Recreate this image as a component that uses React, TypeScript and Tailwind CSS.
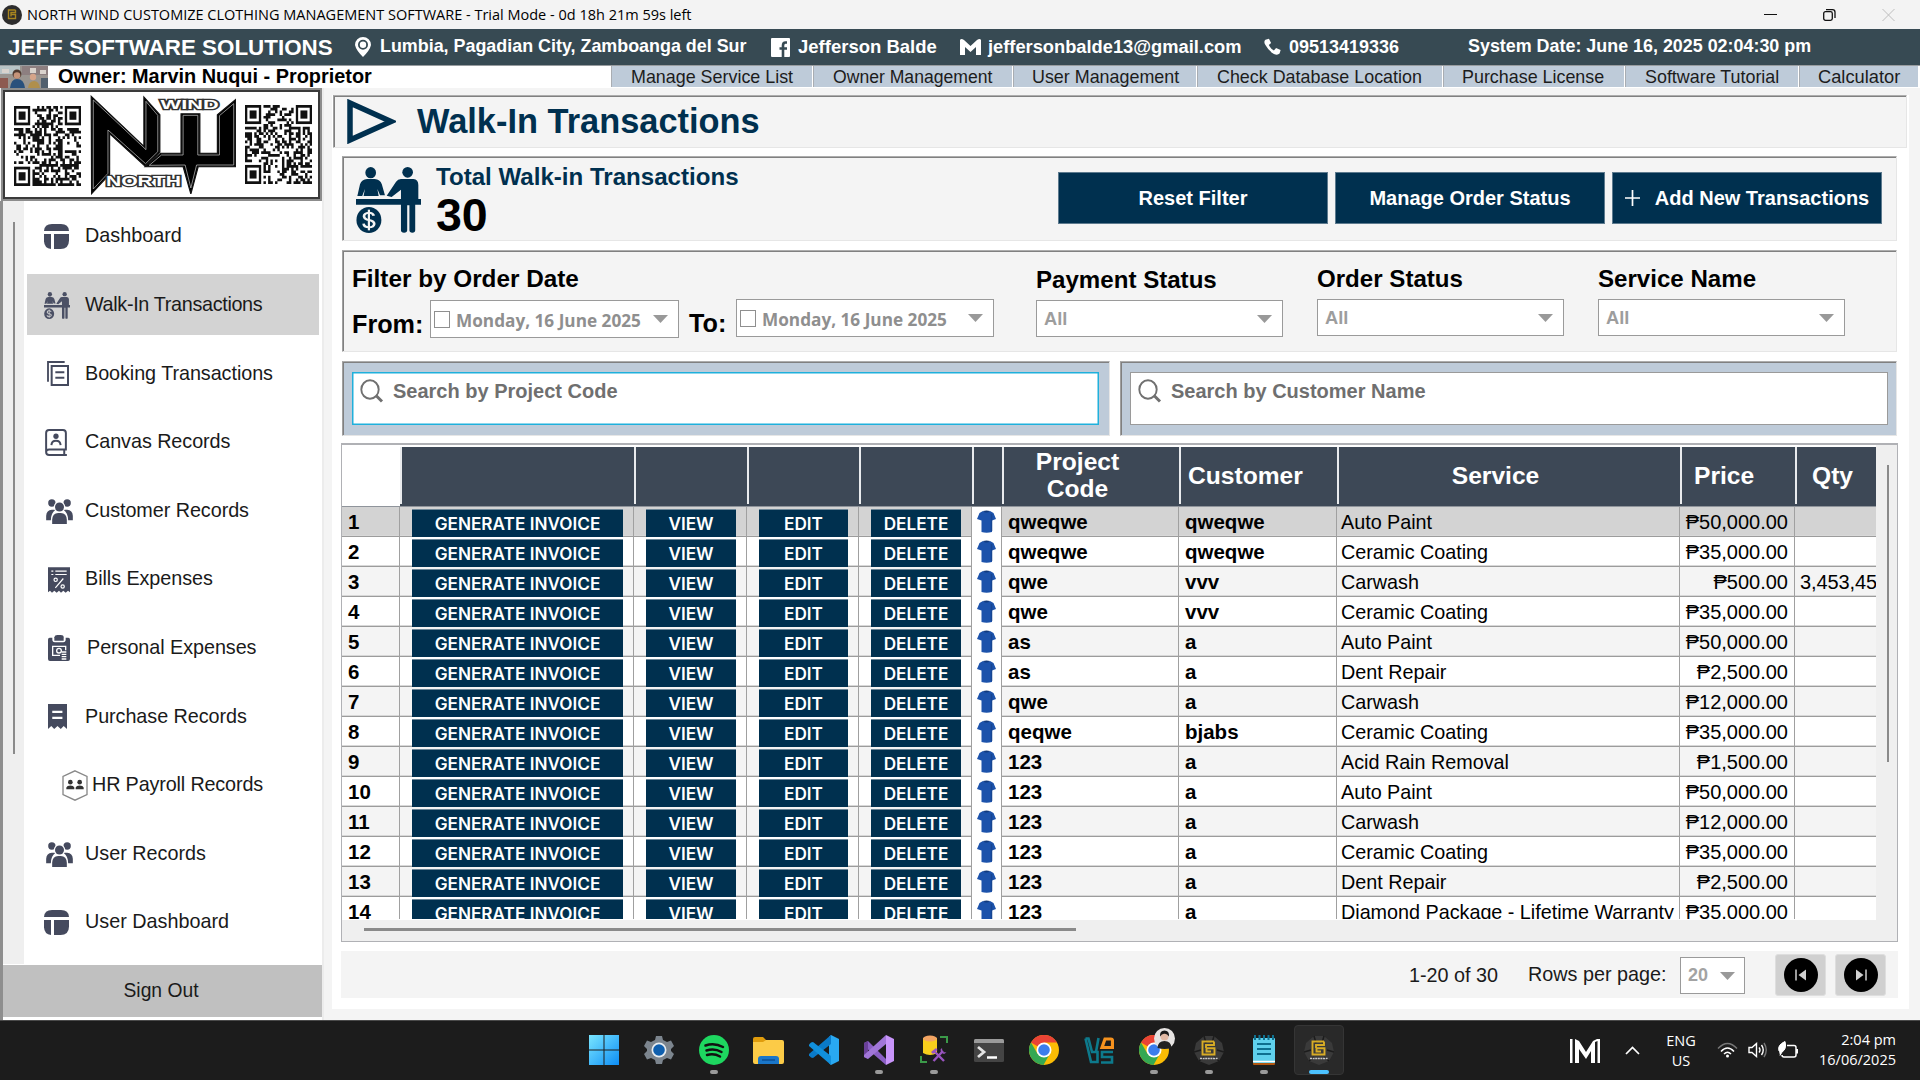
import React, { ReactNode } from 'react';

const INK = '#454a5e';
const NAVY = '#00304f';

/* ---------- Shared icons ---------- */

function CounterIcon({ className, color, paper }: { className: string; color: string; paper: string }) {
  return (
    <svg className={className} viewBox="59 80 146 198" preserveAspectRatio="none" fill={color}>
      <ellipse cx="92" cy="97" rx="12" ry="17" />
      <path d="M62 167 L68 132 Q72 117 84 116 H101 Q113 117 117 132 L124 165 H113 L107 146 L110 167 H76 L79 146 L73 167Z" />
      <ellipse cx="175" cy="96" rx="12" ry="16" />
      <path d="M160 116 H188 Q199 118 199 134 V176 H205 V193 H192 V270 Q192 277 185.500 277 Q179 277 179 270 V195 H174 V270 Q174 277 167 277 Q160 277 160 270 V193 H59 V176 H160 V148 L139 170 L128 166 L149 124 Q153 116 160 116Z" />
      <ellipse cx="88" cy="239" rx="28" ry="39" />
      <g fill="none" stroke={paper} strokeWidth="6">
        <path d="M99 226 Q97 217 88 217 Q77 218 77 228 Q78 237 88 239 Q100 242 100 251 Q99 261 88 261 Q77 261 76 250" />
        <path d="M88 208 V270" strokeWidth="5" />
      </g>
    </svg>
  );
}

function DashboardIcon() {
  return (
    <svg className="ml-5 h-[25px] w-[25px]" viewBox="0 0 75 75" fill={INK}>
      <path d="M0 21 Q1 0 24 0 H51 Q74 0 75 21Z" />
      <path d="M0 30 H21 V75 Q1 73 0 52Z" />
      <path d="M30 30 H75 V50 Q74 75 50 75 H30Z" />
    </svg>
  );
}

function GroupIcon() {
  return (
    <svg className="ml-[22px] h-[25px] w-[27px]" viewBox="0 0 80 75" fill={INK}>
      <circle cx="17" cy="12" r="11" />
      <circle cx="63" cy="12" r="11" />
      <path d="M0 64 V50 Q1 33 17 32 H28 Q14 42 14 64Z M80 64 V50 Q79 33 63 32 H52 Q66 42 66 64Z" />
      <circle cx="40" cy="24" r="17" fill="#fff" />
      <circle cx="40" cy="24" r="13.500" />
      <path d="M18 75 V62 Q19 43 36 42 H44 Q61 43 62 62 V75Z" />
    </svg>
  );
}

function BookingIcon() {
  return (
    <svg className="ml-[23px] h-[25px] w-[22px]" viewBox="0 0 66 75" fill="none" stroke={INK}>
      <path d="M3 62 V3 H53" strokeWidth="5.500" />
      <rect x="14" y="15" width="49" height="57" strokeWidth="6" />
      <path d="M25 34 H52 M25 50 H52" strokeWidth="6" />
    </svg>
  );
}

function CanvasIcon() {
  return (
    <svg className="ml-[21px] h-[27px] w-[22px]" viewBox="0 0 66 82" fill="none" stroke={INK} strokeWidth="6">
      <path d="M3 70 V12 Q3 3 12 3 H54 Q63 3 63 12 V62 H12 Q3 62 3 70 Q3 79 12 79 H66 M58 62 V79" />
      <circle cx="33" cy="22" r="8" fill={INK} stroke="none" />
      <path d="M19 49 Q20 36 33 36 Q46 36 47 49" />
    </svg>
  );
}

function BillsIcon() {
  return (
    <svg className="ml-6 h-[26px] w-[22px]" viewBox="0 0 66 77" fill={INK}>
      <path d="M0 0 H66 V75 L60 71 L53 77 L46 71 L39 77 L33 71 L26 77 L19 71 L12 77 L6 71 L0 75Z" />
      <path d="M10 12 H16 M22 12 H56 M10 22 H16 M22 22 H56 M46 34 L22 62" stroke="#fff" strokeWidth="3.500" />
      <circle cx="23" cy="38" r="5" fill="none" stroke="#fff" strokeWidth="3.500" />
      <circle cx="44" cy="58" r="5" fill="none" stroke="#fff" strokeWidth="3.500" />
    </svg>
  );
}

function PersonalIcon() {
  return (
    <svg className="ml-6 h-[26px] w-[22px]" viewBox="0 0 66 78" fill={INK}>
      <path d="M5 8 H13 V16 Q14 22 20 22 H46 Q52 22 53 16 V8 H61 Q66 8 66 14 V72 Q66 78 60 78 H6 Q0 78 0 72 V14 Q0 8 5 8Z" />
      <path d="M19 17 V7 Q20 0 28 0 H38 Q47 0 47 7 V17Z" />
      <path d="M36 61 H14 V34 H53 V46" fill="none" stroke="#fff" strokeWidth="4" />
      <circle cx="33" cy="47" r="7" fill="none" stroke="#fff" strokeWidth="4" />
      <path d="M41 51 H55 M41 58 H55 M41 65 H55 M41 72 H55" stroke="#fff" strokeWidth="4" />
    </svg>
  );
}

function PurchaseIcon() {
  return (
    <svg className="ml-6 h-[25px] w-[19px]" viewBox="0 0 58 76" fill={INK}>
      <path d="M0 0 H58 V76 L48 67 L39 76 L29 67 L19 76 L10 67 L0 76Z" />
      <path d="M13 24 H44 M13 42 H44" stroke="#fff" strokeWidth="7" />
    </svg>
  );
}

function PayrollIcon() {
  return (
    <svg className="ml-[38px] h-[31px] w-[26px]" viewBox="0 0 78 92" fill="#333">
      <path d="M39 2 L75 19 V73 L39 90 L3 73 V19Z" fill="#fff" stroke="#888" strokeWidth="4" />
      <circle cx="25" cy="36" r="7" />
      <circle cx="53" cy="36" r="7" />
      <path d="M13 57 V52 Q15 46 25 46 Q35 46 37 52 V57Z M41 57 V52 Q43 46 53 46 Q63 46 65 52 V57Z" />
    </svg>
  );
}

function Caret({ className = '' }: { className?: string }) {
  return (
    <svg className={`h-2 w-[15px] shrink-0 ${className}`} viewBox="0 0 15 8" preserveAspectRatio="none">
      <path d="M0 0 H15 L7.500 8Z" fill="#999" />
    </svg>
  );
}

function SearchIcon() {
  return (
    <svg className="mt-[6px] ml-[7px] h-6 w-6 shrink-0" viewBox="0 0 24 24" fill="none" stroke="#707070">
      <ellipse cx="10" cy="10.500" rx="8.700" ry="9.200" strokeWidth="1.900" />
      <path d="M16 16.500 L22 22.500" strokeWidth="3" />
    </svg>
  );
}

/* ---------- Brand artwork ---------- */

const QR_SIZE = 29;

function qrModules(seed: number): string {
  let state = seed;
  let path = '';
  for (let y = 0; y < QR_SIZE; y++) {
    for (let x = 0; x < QR_SIZE; x++) {
      state = (state * 1103515245 + 12345) % 2147483648;
      const inFinder =
        (x < 8 && y < 8) || (x > QR_SIZE - 9 && y < 8) || (x < 8 && y > QR_SIZE - 9);
      if (!inFinder && state / 2147483648 > 0.48) path += `M${x} ${y}h1.050v1h-1.050z`;
    }
  }
  return path;
}

function QrCode({ seed, className }: { seed: number; className: string }) {
  return (
    <svg className={className} viewBox="0 0 29 29" preserveAspectRatio="none">
      <path d={qrModules(seed)} fill="#111" />
      {[[0, 0], [22, 0], [0, 22]].map(([x, y]) => (
        <g key={`${x}-${y}`}>
          <rect x={x + 0.5} y={y + 0.5} width="6" height="6" fill="none" stroke="#111" />
          <rect x={x + 2} y={y + 2} width="3" height="3" fill="#111" />
        </g>
      ))}
    </svg>
  );
}

function NorthWindLogo() {
  return (
    <svg className="mt-[3px] h-[100px] w-[147px]" viewBox="219 286 360 300" preserveAspectRatio="none">
      <g stroke="#111" strokeWidth="3" fill="#000">
        <path d="M222 290 L351 440 V292 L390 345 V458 L354 500 L267 402 V524 L223 582Z" />
        <path d="M354 501 L392 461 H442 V342 H488 V461 H531 V345 L575 300 V501 H484 L466 583 L447 501Z" />
      </g>
      <g fill="none" stroke="#bbb" strokeWidth="2">
        <path d="M227 301 L356 450 V305 L385 347 V456 L355 492 L263 391 V521 L227 568Z" />
        <path d="M364 497 L394 466 H447 V347 H483 V466 H536 V348 L571 312 V496 H480 L466 565 L452 496Z" />
      </g>
      <g fontFamily="Liberation Sans" fontWeight="700" fill="#fff" stroke="#333" strokeWidth="8" paintOrder="stroke">
        <text x="392" y="327" fontSize="41" textLength="142" lengthAdjust="spacingAndGlyphs">WIND</text>
        <text x="258" y="560" fontSize="43" textLength="184" lengthAdjust="spacingAndGlyphs">NORTH</text>
      </g>
    </svg>
  );
}

/* ---------- Top bars ---------- */

function TitleBar() {
  return (
    <div className="flex h-[29px] items-center bg-[#f3f3f3]">
      <svg className="ml-0.5 h-5 w-5" viewBox="0 0 20 20">
        <circle cx="10" cy="10" r="10" fill="#2d2d2d" />
        <path d="M13.500 5 H6.500 V13.500 H13.500 V9.500 H9 M13.500 5 V7.500 H9 V11.500" fill="none" stroke="#a8851f" strokeWidth="1.400" />
      </svg>
      <span className="mt-px ml-[5px] whitespace-nowrap font-['Open_Sans'] text-[14.5px] leading-none">
        NORTH WIND CUSTOMIZE CLOTHING MANAGEMENT SOFTWARE - Trial Mode - 0d 18h 21m 59s left
      </span>
      <div className="mr-[25px] ml-auto flex items-center gap-[46px]">
        <svg className="h-3 w-[13px]" viewBox="0 0 13 12"><path d="M0 5.500 H13" stroke="#111" /></svg>
        <svg className="h-3 w-[13px]" viewBox="0 0 13 12" fill="none" stroke="#111" strokeWidth="1.300">
          <rect x="0.700" y="2.700" width="8.600" height="8.600" rx="1.800" />
          <path d="M3 0.700 H9.500 Q12 0.700 12 3.200 V9" />
        </svg>
        <svg className="h-3 w-[13px]" viewBox="0 0 13 12"><path d="M0.500 0 L12.500 12 M12.500 0 L0.500 12" stroke="#bdbdbd" /></svg>
      </div>
    </div>
  );
}

function CompanyBar() {
  return (
    <div className="grid h-9 grid-cols-[354px_417px_189px_304px_204px_1fr] items-center whitespace-nowrap bg-[#374a53] text-[18px] font-bold leading-none text-white">
      <span className="pt-0.5 pl-2 text-[22.4px]">JEFF SOFTWARE SOLUTIONS</span>
      <div className="flex items-center">
        <svg className="h-5 w-[18px]" viewBox="0 0 18 20">
          <path fillRule="evenodd" d="M9 0 A8 8 0 0 1 17 8 Q16 13 9 20 Q2 13 1 8 A8 8 0 0 1 9 0Z M9 2.800 A5 5 0 1 0 9 12.800 A5 5 0 1 0 9 2.800Z" fill="#fff" />
          <circle cx="9" cy="7.800" r="3.200" fill="#fff" />
        </svg>
        <span className="ml-2 text-[17.9px]">Lumbia, Pagadian City, Zamboanga del Sur</span>
      </div>
      <div className="flex items-center">
        <svg className="h-[19px] w-[19px]" viewBox="0 0 19 19">
          <rect width="19" height="19" rx="1" fill="#fff" />
          <path d="M16 4.500 H14.500 Q12 4.500 12 7.500 V19 M8.500 10.500 H16" fill="none" stroke="#374a53" strokeWidth="2.600" />
        </svg>
        <span className="ml-2 text-[18.5px]">Jefferson Balde</span>
      </div>
      <div className="flex items-center">
        <svg className="h-4 w-[21px]" viewBox="0 0 21 16">
          <path d="M0 16 V1 Q1 -1 4 1 L10.500 7 L17 1 Q20 -1 21 1 V16 H16 V8 L10.500 13 L5 8 V16Z" fill="#fff" />
        </svg>
        <span className="ml-[7px] text-[18.3px]">jeffersonbalde13@gmail.com</span>
      </div>
      <div className="flex items-center">
        <svg className="-mt-0.5 h-[17px] w-[17px]" viewBox="0 0 24 24" fill="#fff">
          <path d="M7 1 L2 2.500 Q-1 5 2 10 Q7 19 14 22.500 Q19 25 22 22 L23.500 17 L17 14 L14 17.500 Q9 15 6.800 10 L10 7Z" />
        </svg>
        <span className="ml-2">09513419336</span>
      </div>
      <span className="text-[17.9px]">System Date: June 16, 2025 02:04:30 pm</span>
    </div>
  );
}

function MenuItem({ width, pad, children }: { width: string; pad: string; children: ReactNode }) {
  return (
    <div className={`flex h-[21px] items-center border-r border-white bg-[#becbd9] pt-0.5 shadow-[inset_1px_0_0_#a9adb2] ${width} ${pad}`}>
      {children}
    </div>
  );
}

function OwnerBar() {
  return (
    <div className="flex h-[23px] items-start whitespace-nowrap border-t border-[#989c9f] bg-white leading-none text-[#1c1c1c]">
      <svg className="h-[22px] w-12" viewBox="0 0 48 22" preserveAspectRatio="none">
        <rect width="48" height="22" fill="#9a9590" />
        <path d="M0 0 H20 V8 H0Z" fill="#b9c4c6" />
        <path d="M22 0 H48 V9 H22Z" fill="#8d7f80" />
        <path d="M2 3 H9 V7 H2Z M30 2 H36 V7 H30Z M40 4 H46 V8 H40Z" fill="#d9d3cd" />
        <circle cx="17" cy="8" r="4.500" fill="#4f3a30" />
        <circle cx="17" cy="9.500" r="3.300" fill="#c6947a" />
        <path d="M10 22 Q11 13 17 13 Q24 13 25 22Z" fill="#29507c" />
        <circle cx="33" cy="11" r="3.200" fill="#d6a489" />
        <path d="M28 22 Q29 15 34 15 Q39 15 40 22Z" fill="#b08f4c" />
        <path d="M0 12 H8 V22 H0Z" fill="#8d5a50" />
        <path d="M41 12 H48 V22 H41Z" fill="#51606e" />
      </svg>
      <span className="mt-px ml-[9px] w-[554px] pl-px text-[19.9px] font-bold text-black">Owner: Marvin Nuqui - Proprietor</span>
      <div className="flex text-[17.9px]">
        <MenuItem width="w-[202px]" pad="pl-5">Manage Service List</MenuItem>
        <MenuItem width="w-[200px]" pad="pl-5"><span className="text-[17.6px]">Owner Management</span></MenuItem>
        <MenuItem width="w-[184px]" pad="pl-[19px]">User Management</MenuItem>
        <MenuItem width="w-[246px]" pad="pl-5">Check Database Location</MenuItem>
        <MenuItem width="w-[182px]" pad="pl-[19px]">Purchase License</MenuItem>
        <MenuItem width="w-[174px]" pad="pl-5">Software Tutorial</MenuItem>
        <MenuItem width="w-[120px]" pad="pl-[19px]"><span className="text-[18.3px]">Calculator</span></MenuItem>
      </div>
    </div>
  );
}

/* ---------- Sidebar ---------- */

const NAV: { label: string; icon: ReactNode; active?: boolean; shift?: string }[] = [
  { label: 'Dashboard', icon: <DashboardIcon /> },
  {
    label: 'Walk-In Transactions',
    icon: <CounterIcon className="ml-5 h-[27px] w-[26px]" color="#4b5065" paper="#d3d3d3" />,
    active: true,
    shift: 'tracking-[-0.33px]',
  },
  { label: 'Booking Transactions', icon: <BookingIcon />, shift: 'tracking-[-0.06px]' },
  { label: 'Canvas Records', icon: <CanvasIcon />, shift: 'tracking-[-0.06px]' },
  { label: 'Customer Records', icon: <GroupIcon />, shift: 'tracking-[-0.06px]' },
  { label: 'Bills Expenses', icon: <BillsIcon />, shift: 'tracking-[-0.06px]' },
  { label: 'Personal Expenses', icon: <PersonalIcon />, shift: 'ml-0.5 tracking-[-0.06px]' },
  { label: 'Purchase Records', icon: <PurchaseIcon />, shift: 'tracking-[-0.06px]' },
  { label: 'HR Payroll Records', icon: <PayrollIcon />, shift: 'ml-[7px] tracking-[-0.15px]' },
  { label: 'User Records', icon: <GroupIcon /> },
  { label: 'User Dashboard', icon: <DashboardIcon /> },
];

function Sidebar() {
  return (
    <aside className="flex h-[932px] w-[324px] shrink-0 flex-col border-r-2 border-[#ececec]">
      <div className="ml-px h-[113px] border-2 border-[#8c8c8c] bg-white">
        <div className="flex h-full items-start border-2 border-[#3a3a3a]">
          <QrCode seed={20} className="mt-[14px] ml-[9px] h-20 w-[67px]" />
          <div className="ml-[9px]"><NorthWindLogo /></div>
          <QrCode seed={77} className="mt-[13px] ml-2 h-[79px] w-[67px]" />
        </div>
      </div>
      <div className="flex min-h-0 flex-1 flex-col border-l-[3px] border-[#8e8e8e] bg-white">
        <div className="flex h-[763px]">
          <div className="h-full w-[21px] shrink-0 bg-[#efefef] pt-[21px] pl-[10px]">
            <div className="h-[532px] w-[2px] bg-[#8b8b8b]" />
          </div>
          <nav className="flex-1 pt-px">
            {NAV.map((item, i) => (
              <div key={i} className="flex h-[68.6px] items-center pr-[3px] pl-[3px]">
                <div className={`flex h-[61px] flex-1 items-center text-[19.8px] whitespace-nowrap text-[#1a1a1a] ${item.active ? 'bg-[#d3d3d3]' : ''}`}>
                  <div className="-ml-[3px] w-[61px] shrink-0 pt-px">{item.icon}</div>
                  <span className={item.shift ?? ''}>{item.label}</span>
                </div>
              </div>
            ))}
          </nav>
        </div>
        <div className="mt-px flex h-[52px] items-center justify-center bg-[#c0c0c0] pr-[3px] text-[19.3px] text-[#1a1a1a]">
          <span className="pt-px">Sign Out</span>
        </div>
      </div>
    </aside>
  );
}

/* ---------- Main content ---------- */

function Panel({ className, children }: { className: string; children: ReactNode }) {
  return (
    <section className={`border border-t-[#adadad] border-r-[#e6e6e6] border-b-[#e6e6e6] border-l-[#a0a0a0] shadow-[inset_1px_1px_0_#808080] ${className}`}>
      {children}
    </section>
  );
}

function ActionButton({ children }: { children: ReactNode }) {
  return (
    <button className="flex h-[52px] w-[270px] items-center justify-center whitespace-nowrap border border-[#5d7a8e] bg-[#00304f] text-[20px] font-bold text-white">
      {children}
    </button>
  );
}

function DateField({ width }: { width: string }) {
  return (
    <div className={`flex h-[38px] items-center border border-[#9a9a9a] bg-white ${width}`}>
      <div className="ml-[3px] h-[17px] w-4 border border-[#8f8f8f]" />
      <span className="ml-[6px] whitespace-nowrap pt-[3px] font-['Open_Sans'] text-[17.2px] leading-none font-bold text-[#8f8f8f]">Monday, 16 June 2025</span>
      <Caret className="mr-[10px] ml-auto" />
    </div>
  );
}

function StatusFilter({ label, className }: { label: string; className: string }) {
  return (
    <div className={`w-[247px] ${className}`}>
      <div className="h-9 text-[24.1px] leading-[31px] font-bold whitespace-nowrap">{label}</div>
      <div className="flex h-[37px] items-center border border-[#9a9a9a] bg-white">
        <span className="ml-[7px] pt-px text-[18.3px] font-bold text-[#9d9d9d]">All</span>
        <Caret className="mr-[10px] ml-auto" />
      </div>
    </div>
  );
}

function SearchBox({ label, focused, className }: { label: string; focused?: boolean; className: string }) {
  return (
    <Panel className={`h-[75px] bg-[#becbd9] pt-[10px] pl-[9px] ${className}`}>
      <div className={`flex h-[53px] items-start border bg-white ${focused ? 'w-[747px] border-[#1fb0dc] shadow-[inset_0_0_0_0.5px_#1fb0dc]' : 'w-[758px] border-[#9a9a9a]'}`}>
        <SearchIcon />
        <span className="mt-[3px] ml-[9px] text-[20px] font-bold whitespace-nowrap text-[#6f6f6f]">{label}</span>
      </div>
    </Panel>
  );
}

const ROWS: [string, string, string, string, string][] = [
  ['qweqwe', 'qweqwe', 'Auto Paint', '₱50,000.00', ''],
  ['qweqwe', 'qweqwe', 'Ceramic Coating', '₱35,000.00', ''],
  ['qwe', 'vvv', 'Carwash', '₱500.00', '3,453,45'],
  ['qwe', 'vvv', 'Ceramic Coating', '₱35,000.00', ''],
  ['as', 'a', 'Auto Paint', '₱50,000.00', ''],
  ['as', 'a', 'Dent Repair', '₱2,500.00', ''],
  ['qwe', 'a', 'Carwash', '₱12,000.00', ''],
  ['qeqwe', 'bjabs', 'Ceramic Coating', '₱35,000.00', ''],
  ['123', 'a', 'Acid Rain Removal', '₱1,500.00', ''],
  ['123', 'a', 'Auto Paint', '₱50,000.00', ''],
  ['123', 'a', 'Carwash', '₱12,000.00', ''],
  ['123', 'a', 'Ceramic Coating', '₱35,000.00', ''],
  ['123', 'a', 'Dent Repair', '₱2,500.00', ''],
  ['123', 'a', 'Diamond Package - Lifetime Warranty', '₱35,000.00', ''],
];

const COLS = 'grid grid-cols-[58px_234px_113px_112px_113px_30px_177px_158px_343px_115px_81px]';

function RowButton({ children }: { children: ReactNode }) {
  return (
    <div className="flex items-end border-r border-[#a0a0a0] pr-[10px] pl-3">
      <div className="flex h-7 flex-1 items-center justify-center border-t border-[#6d8798] bg-[#00304f] pt-px font-[Inter] text-[17.2px] leading-none font-semibold whitespace-nowrap text-white">
        {children}
      </div>
    </div>
  );
}

function Shirt() {
  return (
    <svg className="h-[23px] w-[19px]" viewBox="0 0 19 23">
      <path d="M6 1 Q9.500 3 13 1 L16.500 3 L19 9 L15 10.500 V22 Q9.500 23.500 4.500 22 V10.500 L0 9 L2.500 3Z" fill="#1c52ab" />
      <path d="M6 1 Q9.500 4 13 1 Q9.500 0 6 1Z" fill="#123a7d" />
      <path d="M14.500 4 V21" stroke="#174692" strokeWidth="1.500" />
    </svg>
  );
}

function HeadCell({ className = '', children }: { className?: string; children?: ReactNode }) {
  return (
    <div className={`mb-0.5 flex items-center border-l-2 border-[#e9ebed] ${className}`}>{children}</div>
  );
}

function DataTable() {
  return (
    <section className="mt-[7px] ml-[9px] flex h-[499px] w-[1557px] border border-t-2 border-[#b0b1b5] bg-white">
      <div className="flex w-[1534px] flex-col">
        <div className={`${COLS} mt-0.5 h-[60px] border-b border-[#8f949b] bg-[#3d4856] text-[24.6px] leading-[27.5px] font-bold text-white`}>
          <div className="-mt-0.5 bg-white" />
          <HeadCell />
          <HeadCell />
          <HeadCell />
          <HeadCell />
          <HeadCell />
          <HeadCell className="justify-center pr-[28px] text-center"><span>Project<br />Code</span></HeadCell>
          <HeadCell className="pl-[7px]">Customer</HeadCell>
          <HeadCell className="justify-center pr-[28px]">Service</HeadCell>
          <HeadCell className="pl-3">Price</HeadCell>
          <HeadCell className="pl-[15px]">Qty</HeadCell>
        </div>
        <div className="h-[413px] overflow-hidden">
          {ROWS.map(([code, customer, service, price, qty], i) => (
            <div
              key={i}
              className={`${COLS} h-[30px] border-b border-[#9c9c9c] text-[20px] leading-[30px] whitespace-nowrap text-black shadow-[inset_0_-1px_0_#d8d8d8] ${i === 0 ? 'bg-[#d3d3d3]' : i % 2 ? 'bg-white' : 'bg-[#f4f4f4]'}`}
            >
              <div className="border-r border-[#a0a0a0] pl-[6px] text-[20.5px] font-bold">{i + 1}</div>
              <RowButton>GENERATE INVOICE</RowButton>
              <RowButton>VIEW</RowButton>
              <RowButton>EDIT</RowButton>
              <RowButton>DELETE</RowButton>
              <div className="flex items-center justify-center border-r border-[#a0a0a0] bg-white"><Shirt /></div>
              <div className="border-r border-[#a0a0a0] pl-[6px] text-[20.5px] font-bold">{code}</div>
              <div className="border-r border-[#a0a0a0] pl-[6px] text-[20.5px] font-bold">{customer}</div>
              <div className="border-r border-[#a0a0a0] pl-1 text-[19.8px] tracking-[-0.02px]">{service}</div>
              <div className="border-r border-[#a0a0a0] pr-[6px] text-right">{price}</div>
              <div className="pl-[5px] tracking-[-0.1px]">{qty}</div>
            </div>
          ))}
        </div>
        <div className="mt-px h-[21px] bg-[#efefef] pt-2 pl-[22px]">
          <div className="h-[3px] w-[712px] bg-[#8a8a8a]" />
        </div>
      </div>
      <div className="flex-1 bg-[#efefef] pt-[20px] pl-[11px]">
        <div className="h-[297px] w-[2px] bg-[#8a8a8a]" />
      </div>
    </section>
  );
}

function PagerButton({ flip }: { flip?: boolean }) {
  return (
    <button className="flex h-[42px] w-[51px] items-center justify-center rounded-[3px] border border-[#dedede] bg-[#d0d0d0]">
      <svg className="h-[34px] w-[34px]" viewBox="0 0 34 34">
        <circle cx="17" cy="17" r="17" fill="#000" />
        <path d={flip ? 'M12 11.500 L19.500 17 L12 22.500Z' : 'M22 11.500 L14.500 17 L22 22.500Z'} fill="#d0d0d0" />
        <path d={flip ? 'M22 11.500 V22.500' : 'M12 11.500 V22.500'} stroke="#d0d0d0" strokeWidth="1.500" />
      </svg>
    </button>
  );
}

function MainContent() {
  return (
    <main className="mt-[7px] ml-2 h-[914px] w-[1577px] bg-white">
      <Panel className="ml-px flex h-[53px] w-[1574px] items-center bg-[#f4f4f4] pl-[13px]">
        <svg className="h-[45px] w-[49px]" viewBox="0 0 49 45">
          <path d="M3 4 V41 L44 22.500Z" fill="none" stroke={NAVY} strokeWidth="5.500" />
        </svg>
        <h1 className="-mt-px ml-[21px] text-[34.4px] leading-none font-bold whitespace-nowrap text-[#00304f]">Walk-In Transactions</h1>
      </Panel>

      <Panel className="mt-2 ml-[10px] flex h-[85px] w-[1555px] items-start bg-[#f4f4f4] pt-[10px] pl-[13px]">
        <CounterIcon className="h-[66px] w-[65px]" color={NAVY} paper="#f4f4f4" />
        <div className="ml-[15px] w-[622px] whitespace-nowrap">
          <div className="-mt-0.5 text-[24.1px] leading-6 font-bold text-[#00304f]">Total Walk-in Transactions</div>
          <div className="text-[46.5px] leading-[52px] font-bold text-black">30</div>
        </div>
        <div className="mt-[5px] flex gap-[7px]">
          <ActionButton>Reset Filter</ActionButton>
          <ActionButton>Manage Order Status</ActionButton>
          <ActionButton>
            <svg className="mr-[15px] h-4 w-[15px]" viewBox="0 0 15 16"><path d="M7.500 0 V16 M0 8 H15" stroke="#fff" strokeWidth="1.700" /></svg>
            Add New Transactions
          </ActionButton>
        </div>
      </Panel>

      <Panel className="mt-[9px] ml-[10px] flex h-[102px] w-[1555px] bg-[#f4f4f4] pt-3 pl-[9px] text-black">
        <div className="w-[684px]">
          <div className="h-[35px] text-[24.3px] leading-8 font-bold">Filter by Order Date</div>
          <div className="flex items-start text-[25.2px] leading-[30px] font-bold">
            <span className="mt-[11px] w-[78px]">From:</span>
            <div className="mt-0.5"><DateField width="w-[249px]" /></div>
            <span className="mt-[10px] ml-[10px] w-[47px]">To:</span>
            <div className="mt-px"><DateField width="w-[258px]" /></div>
          </div>
        </div>
        <StatusFilter label="Payment Status" className="mt-px" />
        <StatusFilter label="Order Status" className="ml-[34px]" />
        <StatusFilter label="Service Name" className="ml-[34px]" />
      </Panel>

      <div className="mt-[9px] ml-[10px] flex gap-[10px]">
        <SearchBox label="Search by Project Code" focused className="w-[768px]" />
        <SearchBox label="Search by Customer Name" className="w-[777px]" />
      </div>

      <DataTable />

      <footer className="mt-[9px] ml-[9px] flex h-[47px] w-[1557px] items-center bg-[#f4f4f4] pl-[1068px] text-[19.8px] whitespace-nowrap text-[#1a1a1a]">
        <span className="w-[119px] pt-[3px]">1-20 of 30</span>
        <span className="w-[152px] pt-px">Rows per page:</span>
        <div className="mt-0.5 flex h-[37px] w-[65px] items-center border border-[#9a9a9a] bg-white">
          <span className="ml-[7px] text-[18px] font-bold text-[#a3a3a3]">20</span>
          <Caret className="mr-[9px] ml-auto" />
        </div>
        <div className="ml-[30px] flex gap-[9px]">
          <PagerButton />
          <PagerButton flip />
        </div>
      </footer>
    </main>
  );
}

/* ---------- Taskbar ---------- */

function Chrome() {
  return (
    <svg className="h-[30px] w-[30px]" viewBox="0 0 30 30">
      <circle cx="15" cy="15" r="15" fill="#fbbc05" />
      <path d="M15 15 L2 7.500 A15 15 0 0 1 28 7.500 H15Z" fill="#ea4335" />
      <path d="M2 7.500 A15 15 0 0 0 14.500 30 L21 18.500 L15 15 L8.500 18.800Z" fill="#34a853" />
      <circle cx="15" cy="15" r="7.500" fill="#fff" />
      <circle cx="15" cy="15" r="5.800" fill="#3b7ded" />
    </svg>
  );
}

function GoldBadge() {
  return (
    <svg className="h-[30px] w-[30px]" viewBox="0 0 30 30">
      <path d="M10 1 L20 1 L28 8 L30 17 L25 26 L15 30 L5 26 L0 17 L2 8Z" fill="#3a3a3a" />
      <path d="M10 1 L12 8 M20 1 L18 8 M0 17 L7 15 M30 17 L23 15 M5 26 L10 22 M25 26 L20 22" stroke="#1c1c1c" strokeWidth="1.500" />
      <path d="M20 6.500 H8.500 V19.500 H20.500 V13.200 H12.500 V16.500 H17 M20 6.500 V10 H12 V13" fill="none" stroke="#d8ac26" strokeWidth="1.900" />
      <path d="M6 23.500 H24" stroke="#c9c9c9" strokeWidth="1.400" strokeDasharray="2 .6" />
    </svg>
  );
}

const APPS: { icon: ReactNode; mark?: 'dot' | 'active' }[] = [
  {
    icon: (
      <svg className="h-[30px] w-[30px]" viewBox="0 0 30 30">
        <defs>
          <linearGradient id="win" x1="0" y1="0" x2="1" y2="1">
            <stop offset="0" stopColor="#7ae6ff" />
            <stop offset="1" stopColor="#0d8df5" />
          </linearGradient>
        </defs>
        <path d="M0 0 H14.500 V14.500 H0Z M15.500 0 H30 V14.500 H15.500Z M0 15.500 H14.500 V30 H0Z M15.500 15.500 H30 V30 H15.500Z" fill="url(#win)" />
      </svg>
    ),
  },
  {
    icon: (
      <svg className="h-[30px] w-[30px]" viewBox="0 0 30 30">
        <path d="M12 1 H18 L19 5 L23 7 L27 5.500 L30 11 L27 14 V16 L30 19 L27 24.500 L23 23 L19 25 L18 29 H12 L11 25 L7 23 L3 24.500 L0 19 L3 16 V14 L0 11 L3 5.500 L7 7 L11 5Z" fill="#7c858e" />
        <circle cx="15" cy="15" r="7.500" fill="#e8edf1" />
        <circle cx="15" cy="15" r="5.800" fill="#0f5fae" />
      </svg>
    ),
  },
  {
    mark: 'dot',
    icon: (
      <svg className="h-[30px] w-[30px]" viewBox="0 0 30 30">
        <circle cx="15" cy="15" r="15" fill="#1ed760" />
        <path d="M6.500 10.500 Q15.500 7.500 24 12 M7.500 15.500 Q15.500 13 22.500 17 M8 20 Q15 18 21 21.500" fill="none" stroke="#111" strokeWidth="2.500" strokeLinecap="round" />
      </svg>
    ),
  },
  {
    icon: (
      <svg className="h-[30px] w-[31px]" viewBox="0 0 31 30">
        <path d="M0 8 V4 Q0 2 2 2 H10 L14 6 V9Z" fill="#e09c0c" />
        <path d="M0 7 H10 L13 5 H29 Q31 5 31 7 V27 Q31 29 29 29 H2 Q0 29 0 27Z" fill="#fccb47" />
        <path d="M5 29 V24 Q5 21 8 21 H23 Q26 21 26 24 V29Z" fill="#1a76c9" />
        <path d="M9 25 H22" stroke="#0b4f95" strokeWidth="1.500" />
      </svg>
    ),
  },
  {
    icon: (
      <svg className="h-[30px] w-[30px]" viewBox="0 0 30 30">
        <path d="M22 0 L30 4 V26 L22 30 L20 28 V2Z" fill="#29a9f2" />
        <path d="M22 0 V9 L4 23 L2 22.500 L0 20.500 V19Z" fill="#0a7ac9" />
        <path d="M22 30 V21 L4 7 L2 7.500 L0 9.500 V11Z" fill="#1190dc" />
      </svg>
    ),
  },
  {
    mark: 'dot',
    icon: (
      <svg className="h-[30px] w-[30px]" viewBox="0 0 30 30">
        <path d="M0 8 L4 6 L22 24 V30 L0 11Z" fill="#8a5fc4" />
        <path d="M0 8 L4 6 V24 L0 22Z" fill="#6a4099" />
        <path d="M22 0 L0 20 V22 L4 24 L22 9Z" fill="#a176d8" />
        <path d="M22 0 L30 4 V26 L22 30Z" fill="#c895fa" />
      </svg>
    ),
  },
  {
    mark: 'dot',
    icon: (
      <svg className="h-[30px] w-7" viewBox="0 0 28 30">
        <path d="M3 3 V18 Q10 22 17 18 V3Z" fill="#f8cf1c" />
        <ellipse cx="10" cy="3.500" rx="7" ry="3" fill="#f3a563" />
        <path d="M20 2 H27 V8 M1 21 V27 H7" fill="none" stroke="#3b9a49" strokeWidth="2" />
        <path d="M13.500 26 L23 16 M14 16 L24 26" stroke="#9a54c0" strokeWidth="2.400" />
        <path d="M11 17 L16 13 L17.500 15 L13 19Z M22 13 L22.500 17 L26.500 17.500 L24 19 L21 17.500 L20.500 14.500Z" fill="#9a54c0" />
      </svg>
    ),
  },
  {
    icon: (
      <svg className="h-[23px] w-[30px]" viewBox="0 0 30 23">
        <rect width="30" height="23" rx="1.500" fill="#444" />
        <path d="M0 4 V1.500 Q0 0 1.500 0 H28.500 Q30 0 30 1.500 V4Z" fill="#9b9b9b" />
        <path d="M4 8 L10 13 L4 18" fill="none" stroke="#e4e4e4" strokeWidth="2.800" />
        <path d="M13 18.500 H23" stroke="#fff" strokeWidth="2.500" />
      </svg>
    ),
  },
  { icon: <Chrome /> },
  {
    icon: (
      <svg className="h-[27px] w-[30px]" viewBox="0 0 30 27" fill="none">
        <path d="M1.500 1.500 H4.500 L8 15 H13.500 V25 H7 L1.500 1.500 M12 15 L14.500 1 M29 15 H18 V20 H28 V25.500 H17" stroke="#0d7a8c" strokeWidth="2.600" />
        <path d="M18 10.500 L21 2 H27 Q28.500 2 28.500 4 V10.500Z" stroke="#f6921e" strokeWidth="3.200" />
      </svg>
    ),
  },
  {
    mark: 'dot',
    icon: (
      <div className="relative">
        <Chrome />
        <svg className="absolute -top-[7px] -right-[6px] h-[21px] w-[21px]" viewBox="0 0 21 21">
          <circle cx="10.500" cy="10.500" r="10.500" fill="#e6e3e2" />
          <path d="M3.500 20 Q4 13 10.500 13 Q17 13 17.500 20 Q10.500 22 3.500 20Z" fill="#222" />
          <circle cx="10.500" cy="8.500" r="4" fill="#e2b9a4" />
          <path d="M6 8.500 Q5.500 2.500 10.500 2.500 Q15.500 2.500 15 8.500 Q13 5.500 10.500 5.800 Q8 5.500 6 8.500Z" fill="#191919" />
        </svg>
      </div>
    ),
  },
  { mark: 'dot', icon: <GoldBadge /> },
  {
    mark: 'dot',
    icon: (
      <svg className="h-[30px] w-[22px]" viewBox="0 0 22 30">
        <rect y="25" width="22" height="5" rx="1" fill="#b1560f" />
        <rect y="3" width="22" height="25" rx="1" fill="#5fd0ec" />
        <path d="M0 26.500 H22" stroke="#fff" strokeWidth="1.500" />
        <path d="M2 0 V5 M6.500 0 V5 M11 0 V5 M15.500 0 V5 M20 0 V5" stroke="#0f7291" strokeWidth="2" />
        <path d="M4 9 H18 M4 14 H18 M4 19 H18" stroke="#0e6f8f" strokeWidth="2" />
      </svg>
    ),
  },
  { mark: 'active', icon: <GoldBadge /> },
];

function Taskbar() {
  return (
    <div className="flex h-[60px] items-start border-t border-[#4a4a4a] bg-[#1c1c1c] text-white">
      <div className="ml-[576px] flex">
        {APPS.map((app, i) => (
          <div
            key={i}
            className={`mt-1 flex h-[50px] shrink-0 flex-col items-center ${app.mark === 'active' ? 'ml-[3px] w-[50px] rounded-[4px] border border-[#353535] bg-[#292929]' : 'w-[55px]'}`}
          >
            <div className={`flex h-[42px] items-center pt-2 ${app.mark === 'active' ? '-mt-px' : ''}`}>{app.icon}</div>
            {app.mark === 'dot' && <div className="mt-[3px] h-1 w-2 rounded-full bg-[#9a9a9a]" />}
            {app.mark === 'active' && <div className="mt-[3px] h-1 w-5 rounded-full bg-[#4cc2ff]" />}
          </div>
        ))}
      </div>
      <svg className="mt-[18px] ml-[226px] h-6 w-[30px]" viewBox="0 0 30 24" fill="#fff">
        <path d="M0 0 H2.500 V24 H0Z M5 0 L9 2 L16 13 L23 2 L27 0 H30 V24 H27.500 V2 L25 3 V24 H21 V12 L16 20 L9 10 V24 H5Z" />
      </svg>
      <svg className="mt-[25px] ml-[25px] h-[9px] w-[15px]" viewBox="0 0 15 9">
        <path d="M1 8 L7.500 1.500 L14 8" fill="none" stroke="#fff" strokeWidth="1.700" />
      </svg>
      <div className="mt-[10px] ml-[26px] w-[30px] text-center font-['Open_Sans'] text-[14.5px] leading-5">ENG US</div>
      <svg className="mt-[21px] ml-[21px] h-4 w-[21px]" viewBox="0 0 21 16" fill="none" stroke="#fff" strokeWidth="1.500">
        <path d="M1 6.500 Q10.500 -3.500 20 6.500" stroke="#777" />
        <path d="M4 9.500 Q10.500 2.500 17 9.500 M7 12 Q10.500 8.500 14 12" />
        <circle cx="10.500" cy="14" r="1.500" fill="#fff" stroke="none" />
      </svg>
      <svg className="mt-[21px] ml-[10px] h-4 w-[19px]" viewBox="0 0 19 16" fill="none" stroke="#fff" strokeWidth="1.400">
        <path d="M1 5.500 H4 L8.500 1.500 V14.500 L4 10.500 H1Z M11 5.500 Q13 8 11 10.500 M13.500 3 Q17 8 13.500 13" />
        <path d="M16 1 Q20.500 8 16 15" stroke="#777" />
      </svg>
      <svg className="mt-5 ml-[11px] h-[18px] w-5" viewBox="0 0 20 18" fill="none" stroke="#fff" strokeWidth="1.500">
        <path d="M9 4.500 H16 Q18 4.500 18 6.500 V14 Q18 16 16 16 H6 Q4 16 4 14 M19.500 8 V12.500" />
        <path d="M1 10 Q-1 4 7 0.500 Q9 8 4 11 L2 14.500" fill="#fff" strokeWidth="1" />
      </svg>
      <div className="mt-[9px] mr-6 ml-auto text-right font-['Open_Sans'] text-[14.5px] leading-5 whitespace-nowrap">
        2:04 pm
        <br />
        16/06/2025
      </div>
    </div>
  );
}

export default function App() {
  return (
    <div className="h-[1080px] w-[1920px] overflow-hidden bg-[#f4f4f4] font-['Liberation_Sans',sans-serif] text-black">
      <TitleBar />
      <CompanyBar />
      <OwnerBar />
      <div className="flex h-[932px] items-start">
        <Sidebar />
        <MainContent />
      </div>
      <Taskbar />
    </div>
  );
}
